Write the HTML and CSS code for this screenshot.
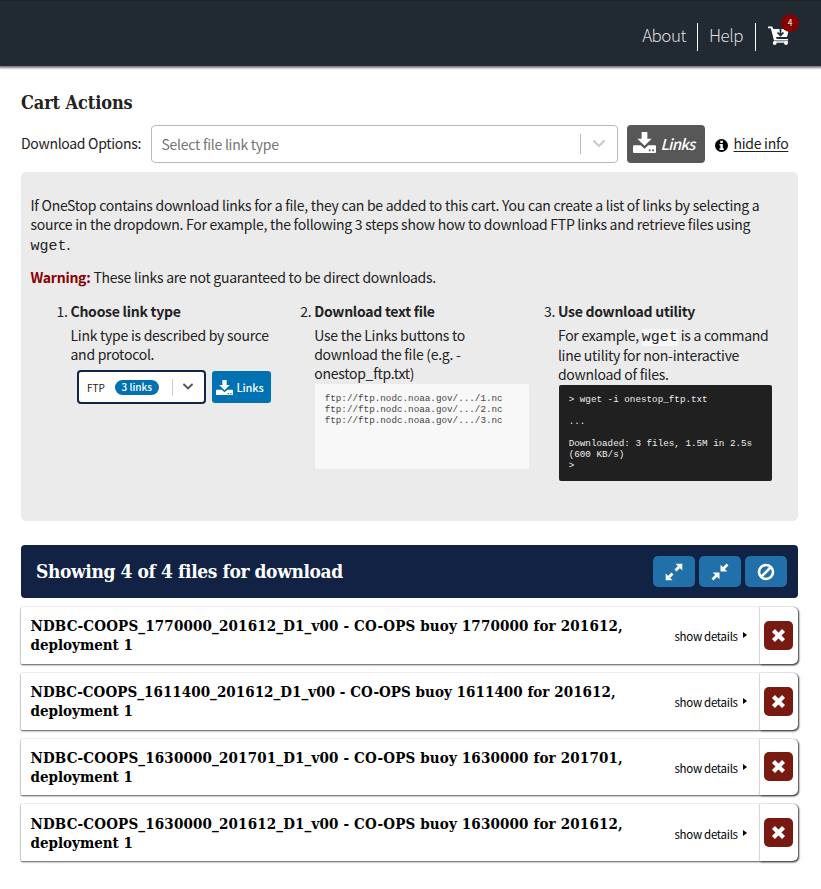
FILE: index.html
```html
<!DOCTYPE html>
<html lang="en">
<head>
<meta charset="utf-8">
<title>Cart</title>
<link rel="stylesheet" href="styles.css">
</head>
<body>
<svg class="defs" width="0" height="0" aria-hidden="true">
  <symbol id="download" viewBox="0 0 24 22"><path fill="currentColor" d="M9 0h6v7h4.500L12 14.500 4.500 7H9z"/><path fill="currentColor" fill-rule="evenodd" d="M1 14h7l4 3.500L16 14h7a1 1 0 0 1 1 1v6a1 1 0 0 1-1 1H1a1 1 0 0 1-1-1v-6a1 1 0 0 1 1-1zm15.500 4.300v1.800h1.800v-1.800zm3.700 0v1.800H22v-1.800z"/></symbol>
  <symbol id="times" viewBox="0 0 14 14"><path d="M2.300 2.300l9.400 9.400M11.700 2.300l-9.400 9.400" stroke="currentColor" stroke-width="3.900"/></symbol>
</svg>
<header class="header">
  <nav class="nav">
    <a class="nav-link">About</a>
    <a class="nav-link nav-help">Help</a>
    <a class="cart">
      <svg width="22" height="20" viewBox="0 0 22 20"><path fill="#fff" d="M0 .5h4.200L5.300 3H21l-2 8H8l.7 2H20v1.500H6L2.800 2.300H0z"/><path d="M6 16h14" stroke="#fff" stroke-width="1.500"/><circle cx="6.700" cy="17" r="1.900" fill="#fff"/><circle cx="18" cy="17" r="1.900" fill="#fff"/><path d="M12.500 3v6M9.500 6.500l3 3 3-3" fill="none" stroke="#212932" stroke-width="1.700"/></svg>
      <span class="badge">4</span>
    </a>
  </nav>
</header>
<main class="main">
  <h1 class="title"><span>Cart Actions</span></h1>
  <div class="options">
    <label class="options-label">Download Options:</label>
    <div class="select"><span class="placeholder">Select file link type</span><i class="separator"></i><svg class="chevron" width="14" height="10" viewBox="0 0 14 10"><path d="M2 2l5 5 5-5" fill="none" stroke="#ccc" stroke-width="2.200" stroke-linecap="round"/></svg></div>
    <button class="links"><svg width="23" height="21"><use href="#download"/></svg><em>Links</em></button>
    <svg class="info-icon" width="13" height="13" viewBox="0 0 13 13"><circle cx="6.500" cy="6.500" r="6.500"/><path fill="#fff" d="M5.300 1.800h2.500V4H5.300zM4.500 5h3.300v4.300h1V11H4.500V9.300h.9V6.600h-.9z"/></svg>
    <a class="hide-info">hide info</a>
  </div>
  <section class="panel">
    <p class="intro">If OneStop contains download links for a file, they can be added to this cart. You can create a list of links by selecting a<br>source in the dropdown. For example, the following 3 steps show how to download FTP links and retrieve files using<br><code class="command">wget</code>.</p>
    <p class="warning"><b>Warning:</b> These links are not guaranteed to be direct downloads.</p>
    <div class="steps">
      <div class="step">
        <span class="number">1.</span>
        <div>
          <h2>Choose link type</h2>
          <p>Link type is described by source<br>and protocol.</p>
          <div class="example">
            <div class="mini-select"><span>FTP</span><b>3 links</b><i></i><svg width="12" height="8" viewBox="0 0 12 8"><path d="M2 1.500l4 4 4-4" fill="none" stroke="#555" stroke-width="1.900" stroke-linecap="round"/></svg></div>
            <div class="mini-links"><svg width="17" height="15.500"><use href="#download"/></svg><span>Links</span></div>
          </div>
        </div>
      </div>
      <div class="step">
        <span class="number">2.</span>
        <div>
          <h2>Download text file</h2>
          <p>Use the Links buttons to<br>download the file (e.g. -<br>onestop_ftp.txt)</p>
          <pre class="file">ftp://ftp.nodc.noaa.gov/.../1.nc
ftp://ftp.nodc.noaa.gov/.../2.nc
ftp://ftp.nodc.noaa.gov/.../3.nc</pre>
        </div>
      </div>
      <div class="step">
        <span class="number">3.</span>
        <div>
          <h2>Use download utility</h2>
          <p class="utility">For example, <code class="chip">wget</code> is a command<br>line utility for non-interactive<br>download of files.</p>
          <pre class="terminal">&gt; wget -i onestop_ftp.txt

...

Downloaded: 3 files, 1.5M in 2.5s
(600 KB/s)
&gt;</pre>
        </div>
      </div>
    </div>
  </section>
  <div class="summary">
    <h2><span>Showing 4 of 4 files for download</span></h2>
    <button><svg width="18" height="18" viewBox="0 0 18 18"><path d="M10.500 7.500L14 4M7.500 10.500L4 14" stroke="#fff" stroke-width="3"/><path fill="#fff" d="M10.500.7h6.800v6.800zM.7 10.500v6.800h6.800z"/></svg></button>
    <button><svg width="18" height="18" viewBox="0 0 18 18"><path d="M12 6l4.500-4.500M6 12l-4.500 4.500" stroke="#fff" stroke-width="2.700"/><path fill="#fff" d="M9.500 1.700v6.800h6.800zM1.700 9.500h6.800v6.800z"/></svg></button>
    <button><svg width="18" height="18" viewBox="0 0 18 18"><circle cx="9" cy="9" r="7" fill="none" stroke="#fff" stroke-width="2.600"/><path d="M4 14L14 4" stroke="#fff" stroke-width="2.600"/></svg></button>
  </div>
  <ul class="items">
    <li class="item"><h3><span>NDBC-COOPS_1770000_201612_D1_v00 - CO-OPS buoy 1770000 for 201612,</span><br>deployment 1</h3><a class="details">show details<i></i></a><div class="remove"><button><svg width="15" height="15"><use href="#times"/></svg></button></div></li>
    <li class="item"><h3><span>NDBC-COOPS_1611400_201612_D1_v00 - CO-OPS buoy 1611400 for 201612,</span><br>deployment 1</h3><a class="details">show details<i></i></a><div class="remove"><button><svg width="15" height="15"><use href="#times"/></svg></button></div></li>
    <li class="item"><h3><span>NDBC-COOPS_1630000_201701_D1_v00 - CO-OPS buoy 1630000 for 201701,</span><br>deployment 1</h3><a class="details">show details<i></i></a><div class="remove"><button><svg width="15" height="15"><use href="#times"/></svg></button></div></li>
    <li class="item"><h3><span>NDBC-COOPS_1630000_201612_D1_v00 - CO-OPS buoy 1630000 for 201612,</span><br>deployment 1</h3><a class="details">show details<i></i></a><div class="remove"><button><svg width="15" height="15"><use href="#times"/></svg></button></div></li>
  </ul>
</main>
</body>
</html>
```
FILE: styles.css
```css
* { box-sizing: border-box; }
body { margin: 0; min-height: 100vh; background: #fff; color: #222; font: 14px/19.3px "Noto Sans CJK SC", sans-serif; letter-spacing: -.26px; }
h1, h2, h3, p, ul, pre { margin: 0; padding: 0; }
button { border: 0; padding: 0; font: inherit; letter-spacing: inherit; color: #fff; display: flex; align-items: center; justify-content: center; }
svg { display: block; flex: none; }
.defs { position: absolute; }
.header { height: 66px; background: #212932; border-top: 1px solid #222; box-shadow: 0 1px 2px 1px #7d7777; display: flex; justify-content: flex-end; }
.nav { display: flex; align-items: center; height: 28px; margin: 22px 31px 0 0; }
.nav-link { height: 28px; padding-right: 11px; border-right: 1px solid #fff; font-size: 17px; font-weight: 300; line-height: 23px; letter-spacing: -.5px; color: #ddd; }
.nav-help { padding: 0 12px 0 11px; }
.cart { position: relative; margin: -2px 0 0 12px; }
.badge { position: absolute; left: 13px; top: -12px; width: 18px; height: 18px; border-radius: 50%; background: #840000; color: #fff; font-size: 8.500px; line-height: 17px; text-align: center; }
.main { padding: 27px 23px 0 21px; }
.title { font: bold 18px/20px "DejaVu Serif Condensed", "DejaVu Serif", serif; letter-spacing: -.1px; white-space: nowrap; }
.options { display: flex; align-items: center; height: 38px; margin-top: 12px; white-space: nowrap; }
.options-label { width: 130px; letter-spacing: -.3px; }
.select { width: 467px; height: 38px; border: 1px solid #bbb; border-radius: 4px; display: flex; align-items: center; padding: 0 11px 0 9.500px; }
.placeholder { flex: 1; color: #757575; padding-top: 1px; }
.separator { width: 1px; height: 20px; background: #bbb; margin-right: 11px; }
.links { width: 78px; height: 38px; margin-left: 9px; padding-right: 5px; border-radius: 4px; background: #575757; gap: 5px; font-size: 15px; font-weight: 500; letter-spacing: -.8px; }
.links svg { margin-top: -4px; }
.info-icon { margin: 3px 6px 0 10px; }
.hide-info { margin-left: -.5px; text-decoration: underline; text-underline-offset: 2px; }
.panel { height: 349px; margin-top: 9px; padding: 24px 9px 0 9.500px; background: #ebebeb; border-radius: 5px; white-space: nowrap; }
.command { font: 15px/19px "Liberation Mono", monospace; letter-spacing: 0; }
.warning { margin-top: 12px; }
.warning b { color: #8b0000; }
.steps { display: grid; grid-template-columns: 243.700px 243.700px 1fr; margin: 15px 0 0 26px; }
.step { display: flex; }
.number { width: 14px; }
.step h2 { font-size: 14px; line-height: 19px; margin-bottom: 5px; }
.chip { font: 15px/17px "Liberation Mono", monospace; letter-spacing: 0; background: #f8f8f8; }
.example { display: flex; gap: 6px; margin: 6px 0 0 6.500px; font-size: 10px; }
.mini-select { width: 129px; height: 34px; border: 2px solid #112547; border-radius: 4px; background: #fff; display: flex; align-items: center; padding-left: 8px; letter-spacing: 0; }
.mini-select b { width: 44px; height: 15px; line-height: 14px; border-radius: 8px; background: #0072b2; color: #fff; text-align: center; margin: 0 13px 0 10px; font-weight: 500; }
.mini-select i { width: 1px; height: 17px; background: #ccc; margin-right: 9px; }
.mini-links { width: 58.500px; height: 32px; margin-top: 1px; background: #0072b2; color: #fff; border-radius: 3px; display: flex; align-items: center; gap: 3.500px; padding-left: 4px; font-size: 11px; font-weight: 500; letter-spacing: -.1px; }
pre { font: 9.280px/11px "Liberation Mono", monospace; letter-spacing: 0; border-radius: 2px; padding: 9px 10px; }
.file { width: 214px; height: 85px; background: #f8f8f8; color: #444; margin-left: .5px; }
.terminal { width: 213px; height: 96px; background: #202020; color: #eee; margin: 1px 0 0 .8px; }
.summary { height: 53px; margin-top: 24px; background: #112244; border-radius: 4px; padding: 0 11px 0 15px; display: flex; align-items: center; gap: 4px; }
.summary h2 { flex: 1; margin-top: -2px; font: bold 19px/24px "DejaVu Serif Condensed", "DejaVu Serif", serif; color: #fff; letter-spacing: -.4px; white-space: nowrap; }
.summary button { width: 42px; height: 31px; background: #2270aa; border-radius: 5px; }
.items { list-style: none; display: grid; gap: 9px; margin-top: 9px; }
.item { height: 56.800px; display: flex; align-items: center; background: #fff; border-radius: 1px 5px 5px 1px; box-shadow: 0 1px 2px #555, 0 0 1px #aaa; color: #000; white-space: nowrap; }
.item h3 { width: 653px; padding: 1.500px 0 0 9.500px; font: bold 15px/19px "DejaVu Serif Condensed", "DejaVu Serif", serif; letter-spacing: 0; }
.item h3 span { letter-spacing: .16px; }
.item:nth-child(2) h3 span { letter-spacing: .05px; }
.details { width: 86px; font-size: 11.500px; padding: 3px 0 0 .5px; display: flex; align-items: center; letter-spacing: -.3px; }
.details i { border: 3px solid transparent; border-left: 4px solid #000; border-right: 0; margin: -3px 0 0 5.500px; }
.remove { width: 38px; height: 100%; padding-left: 4px; display: flex; align-items: center; border-radius: 0 5px 5px 0; box-shadow: 1px 1px 2px #444, -1px 0 1px #ddd; }
.remove button { width: 29px; height: 29px; background: #781912; border-radius: 5px; }
```
